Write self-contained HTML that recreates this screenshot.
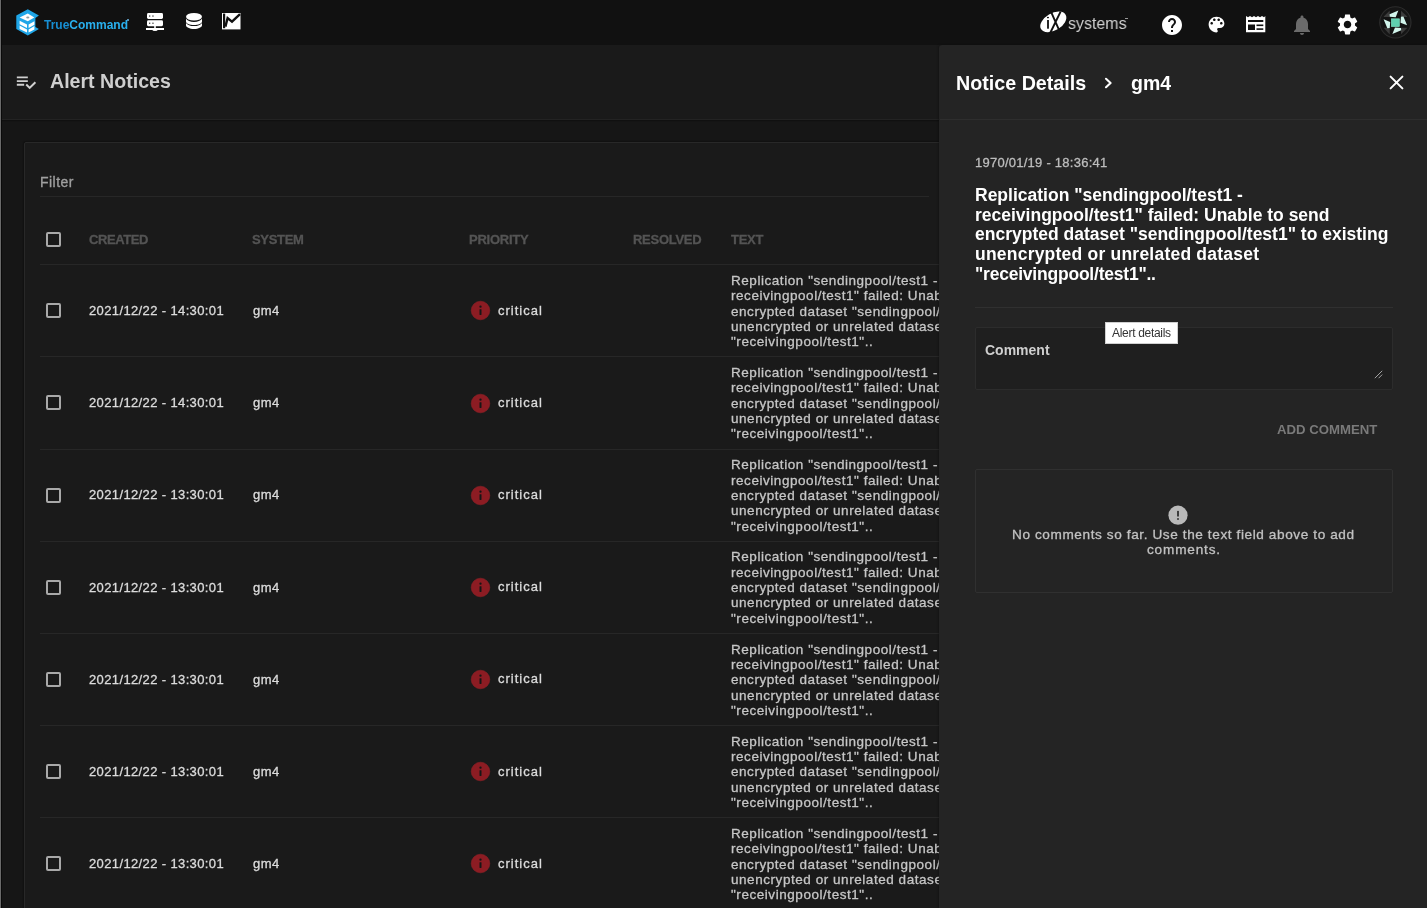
<!DOCTYPE html>
<html><head><meta charset="utf-8"><style>
*{box-sizing:border-box;margin:0;padding:0}
html,body{width:1427px;height:908px;overflow:hidden;background:#161616;font-family:"Liberation Sans",sans-serif;}
.abs{position:absolute}
.t{position:absolute;white-space:nowrap;line-height:1;will-change:transform}
.m{-webkit-text-stroke:0.3px currentColor}
svg{position:absolute;overflow:visible}
#top{left:0;top:0;width:1427px;height:45px;background:#111111}
#winl{left:0;top:0;width:1px;height:908px;background:#6a6a6a}
#winl2{left:1px;top:0;width:1px;height:908px;background:#0a0a0a}
#mainhdr{left:2px;top:45px;width:938px;height:75px;background:#1a1a1a;border-bottom:1px solid #232323;box-shadow:0 1px 1px #101010}
#card{left:24px;top:142px;width:930px;height:800px;background:#1a1a1a;border:1px solid #282828;border-radius:2px;box-shadow:0 0 1px 1px #111}
#panel{left:939px;top:45px;width:488px;height:863px;background:#242424;border-top-left-radius:3px;box-shadow:-1px 0 2px rgba(0,0,0,0.25)}
.cb{position:absolute;width:15px;height:15px;border:2px solid #a9a9a9;border-radius:2px}
.hl{position:absolute;height:1px;background:#272727}
</style></head><body>
<div class="abs" id="top"></div><div class="abs" id="mainhdr"></div><div class="abs" id="card"></div><svg style="left:15px;top:71.2px" width="22" height="22" viewBox="0 0 24 24"><path fill="#d0d0d0" d="M14 10H2v2h12v-2zm0-4H2v2h12V6zM2 16h8v-2H2v2zm19.5-4.5L23 13l-6.99 7-4.51-4.5L13 14l3.01 3 5.49-5.5z"/></svg><div class="t " style="left:50.0px;top:72.41px;font-size:19.6px;font-weight:700;color:#cfcfcf;letter-spacing:0px;">Alert Notices</div>
<div class="t m" style="left:40.0px;top:175.15px;font-size:14px;font-weight:400;color:#a0a0a0;letter-spacing:0.48px;">Filter</div>
<div class="hl" style="left:40px;top:196px;width:889px"></div><div class="cb" style="left:46px;top:232px"></div><div class="t m" style="left:89.4px;top:232.50px;font-size:13px;font-weight:700;color:#545454;letter-spacing:-0.4px;">CREATED</div>
<div class="t m" style="left:252.3px;top:232.50px;font-size:13px;font-weight:700;color:#545454;letter-spacing:-0.33px;">SYSTEM</div>
<div class="t m" style="left:469.3px;top:232.50px;font-size:13px;font-weight:700;color:#545454;letter-spacing:-0.24px;">PRIORITY</div>
<div class="t m" style="left:633.0px;top:232.50px;font-size:13px;font-weight:700;color:#545454;letter-spacing:-0.28px;">RESOLVED</div>
<div class="t m" style="left:731.4px;top:232.50px;font-size:13px;font-weight:700;color:#545454;letter-spacing:-0.3px;">TEXT</div>
<div class="hl" style="left:40px;top:264px;width:900px"></div><div class="cb" style="left:46px;top:303.2px"></div><div class="t m" style="left:89.2px;top:304.00px;font-size:13px;font-weight:400;color:#dcdcdc;letter-spacing:0.37px;">2021/12/22 - 14:30:01</div>
<div class="t m" style="left:252.5px;top:304.00px;font-size:13px;font-weight:400;color:#dcdcdc;letter-spacing:0.5px;">gm4</div>
<svg style="left:471px;top:301.4px" width="19" height="19" viewBox="0 0 19 19"><circle cx="9.5" cy="9.5" r="9.3" fill="#8c1c23" stroke="#9a2229" stroke-width="0.5"/><rect x="8.5" y="8.2" width="2" height="5.8" rx="0.4" fill="#161616"/><circle cx="9.5" cy="5.7" r="1.15" fill="#161616"/></svg><div class="t m" style="left:497.8px;top:303.80px;font-size:13px;font-weight:400;color:#dcdcdc;letter-spacing:1.0px;">critical</div>
<div class="t m" style="left:730.6px;top:273.97px;font-size:13.5px;font-weight:400;color:#c6c6c6;letter-spacing:0.55px;">Replication "sendingpool/test1 -</div>
<div class="t m" style="left:730.6px;top:289.27px;font-size:13.5px;font-weight:400;color:#c6c6c6;letter-spacing:0.55px;">receivingpool/test1" failed: Unable to send</div>
<div class="t m" style="left:730.6px;top:304.57px;font-size:13.5px;font-weight:400;color:#c6c6c6;letter-spacing:0.55px;">encrypted dataset "sendingpool/test1" to existing</div>
<div class="t m" style="left:730.6px;top:319.87px;font-size:13.5px;font-weight:400;color:#c6c6c6;letter-spacing:0.55px;">unencrypted or unrelated dataset</div>
<div class="t m" style="left:730.6px;top:335.17px;font-size:13.5px;font-weight:400;color:#c6c6c6;letter-spacing:0.55px;">"receivingpool/test1"..</div>
<div class="cb" style="left:46px;top:395.37px"></div><div class="t m" style="left:89.2px;top:396.17px;font-size:13px;font-weight:400;color:#dcdcdc;letter-spacing:0.37px;">2021/12/22 - 14:30:01</div>
<div class="t m" style="left:252.5px;top:396.17px;font-size:13px;font-weight:400;color:#dcdcdc;letter-spacing:0.5px;">gm4</div>
<svg style="left:471px;top:393.57px" width="19" height="19" viewBox="0 0 19 19"><circle cx="9.5" cy="9.5" r="9.3" fill="#8c1c23" stroke="#9a2229" stroke-width="0.5"/><rect x="8.5" y="8.2" width="2" height="5.8" rx="0.4" fill="#161616"/><circle cx="9.5" cy="5.7" r="1.15" fill="#161616"/></svg><div class="t m" style="left:497.8px;top:395.97px;font-size:13px;font-weight:400;color:#dcdcdc;letter-spacing:1.0px;">critical</div>
<div class="t m" style="left:730.6px;top:366.14px;font-size:13.5px;font-weight:400;color:#c6c6c6;letter-spacing:0.55px;">Replication "sendingpool/test1 -</div>
<div class="t m" style="left:730.6px;top:381.44px;font-size:13.5px;font-weight:400;color:#c6c6c6;letter-spacing:0.55px;">receivingpool/test1" failed: Unable to send</div>
<div class="t m" style="left:730.6px;top:396.74px;font-size:13.5px;font-weight:400;color:#c6c6c6;letter-spacing:0.55px;">encrypted dataset "sendingpool/test1" to existing</div>
<div class="t m" style="left:730.6px;top:412.04px;font-size:13.5px;font-weight:400;color:#c6c6c6;letter-spacing:0.55px;">unencrypted or unrelated dataset</div>
<div class="t m" style="left:730.6px;top:427.34px;font-size:13.5px;font-weight:400;color:#c6c6c6;letter-spacing:0.55px;">"receivingpool/test1"..</div>
<div class="hl" style="left:40px;top:356.37px;width:900px"></div><div class="cb" style="left:46px;top:487.53999999999996px"></div><div class="t m" style="left:89.2px;top:488.34px;font-size:13px;font-weight:400;color:#dcdcdc;letter-spacing:0.37px;">2021/12/22 - 13:30:01</div>
<div class="t m" style="left:252.5px;top:488.34px;font-size:13px;font-weight:400;color:#dcdcdc;letter-spacing:0.5px;">gm4</div>
<svg style="left:471px;top:485.73999999999995px" width="19" height="19" viewBox="0 0 19 19"><circle cx="9.5" cy="9.5" r="9.3" fill="#8c1c23" stroke="#9a2229" stroke-width="0.5"/><rect x="8.5" y="8.2" width="2" height="5.8" rx="0.4" fill="#161616"/><circle cx="9.5" cy="5.7" r="1.15" fill="#161616"/></svg><div class="t m" style="left:497.8px;top:488.14px;font-size:13px;font-weight:400;color:#dcdcdc;letter-spacing:1.0px;">critical</div>
<div class="t m" style="left:730.6px;top:458.31px;font-size:13.5px;font-weight:400;color:#c6c6c6;letter-spacing:0.55px;">Replication "sendingpool/test1 -</div>
<div class="t m" style="left:730.6px;top:473.61px;font-size:13.5px;font-weight:400;color:#c6c6c6;letter-spacing:0.55px;">receivingpool/test1" failed: Unable to send</div>
<div class="t m" style="left:730.6px;top:488.91px;font-size:13.5px;font-weight:400;color:#c6c6c6;letter-spacing:0.55px;">encrypted dataset "sendingpool/test1" to existing</div>
<div class="t m" style="left:730.6px;top:504.21px;font-size:13.5px;font-weight:400;color:#c6c6c6;letter-spacing:0.55px;">unencrypted or unrelated dataset</div>
<div class="t m" style="left:730.6px;top:519.51px;font-size:13.5px;font-weight:400;color:#c6c6c6;letter-spacing:0.55px;">"receivingpool/test1"..</div>
<div class="hl" style="left:40px;top:448.53999999999996px;width:900px"></div><div class="cb" style="left:46px;top:579.71px"></div><div class="t m" style="left:89.2px;top:580.51px;font-size:13px;font-weight:400;color:#dcdcdc;letter-spacing:0.37px;">2021/12/22 - 13:30:01</div>
<div class="t m" style="left:252.5px;top:580.51px;font-size:13px;font-weight:400;color:#dcdcdc;letter-spacing:0.5px;">gm4</div>
<svg style="left:471px;top:577.9100000000001px" width="19" height="19" viewBox="0 0 19 19"><circle cx="9.5" cy="9.5" r="9.3" fill="#8c1c23" stroke="#9a2229" stroke-width="0.5"/><rect x="8.5" y="8.2" width="2" height="5.8" rx="0.4" fill="#161616"/><circle cx="9.5" cy="5.7" r="1.15" fill="#161616"/></svg><div class="t m" style="left:497.8px;top:580.31px;font-size:13px;font-weight:400;color:#dcdcdc;letter-spacing:1.0px;">critical</div>
<div class="t m" style="left:730.6px;top:550.48px;font-size:13.5px;font-weight:400;color:#c6c6c6;letter-spacing:0.55px;">Replication "sendingpool/test1 -</div>
<div class="t m" style="left:730.6px;top:565.78px;font-size:13.5px;font-weight:400;color:#c6c6c6;letter-spacing:0.55px;">receivingpool/test1" failed: Unable to send</div>
<div class="t m" style="left:730.6px;top:581.08px;font-size:13.5px;font-weight:400;color:#c6c6c6;letter-spacing:0.55px;">encrypted dataset "sendingpool/test1" to existing</div>
<div class="t m" style="left:730.6px;top:596.38px;font-size:13.5px;font-weight:400;color:#c6c6c6;letter-spacing:0.55px;">unencrypted or unrelated dataset</div>
<div class="t m" style="left:730.6px;top:611.68px;font-size:13.5px;font-weight:400;color:#c6c6c6;letter-spacing:0.55px;">"receivingpool/test1"..</div>
<div class="hl" style="left:40px;top:540.71px;width:900px"></div><div class="cb" style="left:46px;top:671.88px"></div><div class="t m" style="left:89.2px;top:672.68px;font-size:13px;font-weight:400;color:#dcdcdc;letter-spacing:0.37px;">2021/12/22 - 13:30:01</div>
<div class="t m" style="left:252.5px;top:672.68px;font-size:13px;font-weight:400;color:#dcdcdc;letter-spacing:0.5px;">gm4</div>
<svg style="left:471px;top:670.08px" width="19" height="19" viewBox="0 0 19 19"><circle cx="9.5" cy="9.5" r="9.3" fill="#8c1c23" stroke="#9a2229" stroke-width="0.5"/><rect x="8.5" y="8.2" width="2" height="5.8" rx="0.4" fill="#161616"/><circle cx="9.5" cy="5.7" r="1.15" fill="#161616"/></svg><div class="t m" style="left:497.8px;top:672.48px;font-size:13px;font-weight:400;color:#dcdcdc;letter-spacing:1.0px;">critical</div>
<div class="t m" style="left:730.6px;top:642.65px;font-size:13.5px;font-weight:400;color:#c6c6c6;letter-spacing:0.55px;">Replication "sendingpool/test1 -</div>
<div class="t m" style="left:730.6px;top:657.95px;font-size:13.5px;font-weight:400;color:#c6c6c6;letter-spacing:0.55px;">receivingpool/test1" failed: Unable to send</div>
<div class="t m" style="left:730.6px;top:673.25px;font-size:13.5px;font-weight:400;color:#c6c6c6;letter-spacing:0.55px;">encrypted dataset "sendingpool/test1" to existing</div>
<div class="t m" style="left:730.6px;top:688.55px;font-size:13.5px;font-weight:400;color:#c6c6c6;letter-spacing:0.55px;">unencrypted or unrelated dataset</div>
<div class="t m" style="left:730.6px;top:703.85px;font-size:13.5px;font-weight:400;color:#c6c6c6;letter-spacing:0.55px;">"receivingpool/test1"..</div>
<div class="hl" style="left:40px;top:632.88px;width:900px"></div><div class="cb" style="left:46px;top:764.05px"></div><div class="t m" style="left:89.2px;top:764.85px;font-size:13px;font-weight:400;color:#dcdcdc;letter-spacing:0.37px;">2021/12/22 - 13:30:01</div>
<div class="t m" style="left:252.5px;top:764.85px;font-size:13px;font-weight:400;color:#dcdcdc;letter-spacing:0.5px;">gm4</div>
<svg style="left:471px;top:762.25px" width="19" height="19" viewBox="0 0 19 19"><circle cx="9.5" cy="9.5" r="9.3" fill="#8c1c23" stroke="#9a2229" stroke-width="0.5"/><rect x="8.5" y="8.2" width="2" height="5.8" rx="0.4" fill="#161616"/><circle cx="9.5" cy="5.7" r="1.15" fill="#161616"/></svg><div class="t m" style="left:497.8px;top:764.65px;font-size:13px;font-weight:400;color:#dcdcdc;letter-spacing:1.0px;">critical</div>
<div class="t m" style="left:730.6px;top:734.82px;font-size:13.5px;font-weight:400;color:#c6c6c6;letter-spacing:0.55px;">Replication "sendingpool/test1 -</div>
<div class="t m" style="left:730.6px;top:750.12px;font-size:13.5px;font-weight:400;color:#c6c6c6;letter-spacing:0.55px;">receivingpool/test1" failed: Unable to send</div>
<div class="t m" style="left:730.6px;top:765.42px;font-size:13.5px;font-weight:400;color:#c6c6c6;letter-spacing:0.55px;">encrypted dataset "sendingpool/test1" to existing</div>
<div class="t m" style="left:730.6px;top:780.72px;font-size:13.5px;font-weight:400;color:#c6c6c6;letter-spacing:0.55px;">unencrypted or unrelated dataset</div>
<div class="t m" style="left:730.6px;top:796.02px;font-size:13.5px;font-weight:400;color:#c6c6c6;letter-spacing:0.55px;">"receivingpool/test1"..</div>
<div class="hl" style="left:40px;top:725.05px;width:900px"></div><div class="cb" style="left:46px;top:856.22px"></div><div class="t m" style="left:89.2px;top:857.02px;font-size:13px;font-weight:400;color:#dcdcdc;letter-spacing:0.37px;">2021/12/22 - 13:30:01</div>
<div class="t m" style="left:252.5px;top:857.02px;font-size:13px;font-weight:400;color:#dcdcdc;letter-spacing:0.5px;">gm4</div>
<svg style="left:471px;top:854.4200000000001px" width="19" height="19" viewBox="0 0 19 19"><circle cx="9.5" cy="9.5" r="9.3" fill="#8c1c23" stroke="#9a2229" stroke-width="0.5"/><rect x="8.5" y="8.2" width="2" height="5.8" rx="0.4" fill="#161616"/><circle cx="9.5" cy="5.7" r="1.15" fill="#161616"/></svg><div class="t m" style="left:497.8px;top:856.82px;font-size:13px;font-weight:400;color:#dcdcdc;letter-spacing:1.0px;">critical</div>
<div class="t m" style="left:730.6px;top:826.99px;font-size:13.5px;font-weight:400;color:#c6c6c6;letter-spacing:0.55px;">Replication "sendingpool/test1 -</div>
<div class="t m" style="left:730.6px;top:842.29px;font-size:13.5px;font-weight:400;color:#c6c6c6;letter-spacing:0.55px;">receivingpool/test1" failed: Unable to send</div>
<div class="t m" style="left:730.6px;top:857.59px;font-size:13.5px;font-weight:400;color:#c6c6c6;letter-spacing:0.55px;">encrypted dataset "sendingpool/test1" to existing</div>
<div class="t m" style="left:730.6px;top:872.89px;font-size:13.5px;font-weight:400;color:#c6c6c6;letter-spacing:0.55px;">unencrypted or unrelated dataset</div>
<div class="t m" style="left:730.6px;top:888.19px;font-size:13.5px;font-weight:400;color:#c6c6c6;letter-spacing:0.55px;">"receivingpool/test1"..</div>
<div class="hl" style="left:40px;top:817.22px;width:900px"></div><div class="abs" id="panel"></div><div class="t " style="left:956.0px;top:73.52px;font-size:19.7px;font-weight:700;color:#ffffff;letter-spacing:0px;">Notice Details</div>
<svg style="left:1104px;top:77px" width="10" height="12" viewBox="0 0 10 12"><path d="M2 1.8L6.6 6L2 10.2" stroke="#fff" stroke-width="2.1" fill="none" stroke-linecap="round" stroke-linejoin="round"/></svg><div class="t " style="left:1131.0px;top:73.69px;font-size:19.5px;font-weight:700;color:#ffffff;letter-spacing:0px;">gm4</div>
<svg style="left:1389px;top:75px" width="16" height="16" viewBox="0 0 16 16"><path d="M1.6 1.6L13.4 13.4M13.4 1.6L1.6 13.4" stroke="#fff" stroke-width="2" stroke-linecap="round"/></svg><div class="hl" style="left:940px;top:119px;width:487px;background:#2e2e2e"></div><div class="t m" style="left:974.6px;top:155.60px;font-size:13px;font-weight:400;color:#bdbdbd;letter-spacing:0.25px;">1970/01/19 - 18:36:41</div>
<div class="t " style="left:975.0px;top:187.29px;font-size:17.5px;font-weight:700;color:#ffffff;letter-spacing:0px;">Replication "sendingpool/test1 -</div>
<div class="t " style="left:975.0px;top:206.89px;font-size:17.5px;font-weight:700;color:#ffffff;letter-spacing:0px;">receivingpool/test1" failed: Unable to send</div>
<div class="t " style="left:975.0px;top:226.49px;font-size:17.5px;font-weight:700;color:#ffffff;letter-spacing:0px;">encrypted dataset "sendingpool/test1" to existing</div>
<div class="t " style="left:975.0px;top:246.09px;font-size:17.5px;font-weight:700;color:#ffffff;letter-spacing:0.22px;">unencrypted or unrelated dataset</div>
<div class="t " style="left:975.0px;top:265.69px;font-size:17.5px;font-weight:700;color:#ffffff;letter-spacing:-0.22px;">"receivingpool/test1"..</div>
<div class="hl" style="left:975px;top:307px;width:418px;background:#303030"></div><div class="abs" style="left:975px;top:327px;width:418px;height:63px;background:#1f1f1f;border:1px solid #2c2c2c;border-radius:2px"></div><div class="t " style="left:985.0px;top:343.35px;font-size:14px;font-weight:700;color:#cfcfcf;letter-spacing:0px;">Comment</div>
<svg style="left:1373px;top:369px" width="10" height="10" viewBox="0 0 10 10"><path d="M1.8 9.2L9.2 1.8M5.6 9.2L9.2 5.6" stroke="#a5a5a5" stroke-width="1"/></svg><div class="abs" style="left:1105px;top:322px;width:73px;height:22px;background:#fff;border:1px solid #d0d0d0"></div><div class="t " style="left:1111.6px;top:326.84px;font-size:12px;font-weight:400;color:#333;letter-spacing:-0.3px;">Alert details</div>
<div class="t " style="left:1277.0px;top:423.43px;font-size:13.2px;font-weight:700;color:#7a7a7a;letter-spacing:0px;">ADD COMMENT</div>
<div class="abs" style="left:975px;top:469px;width:418px;height:124px;border:1px solid #303030;border-radius:2px"></div><svg style="left:1168px;top:505px" width="20" height="20" viewBox="0 0 20 20"><circle cx="10" cy="10.2" r="9.6" fill="#b9b9b9"/><rect x="9.15" y="5.9" width="1.7" height="5.6" fill="#2a2a2a"/><rect x="9.15" y="13.2" width="1.7" height="1.6" fill="#2a2a2a"/></svg><div class="t m" style="left:1012.0px;top:528.49px;font-size:13.6px;font-weight:400;color:#c2c2c2;letter-spacing:0.6px;">No comments so far. Use the text field above to add</div>
<div class="t m" style="left:1147.0px;top:542.99px;font-size:13.6px;font-weight:400;color:#c2c2c2;letter-spacing:0.82px;">comments.</div>
<svg style="left:16px;top:9px" width="24" height="27" viewBox="0 0 24 27">
<path d="M11.8 0.2L22.9 6.6L19.4 9.1L19.4 18L22.9 20L11.8 26.4L0.3 20L0.3 6.6Z" fill="#1fa6e8"/>
<path d="M3.6 8.6L11.8 4.6L18.4 8.6L11.8 12.2Z" fill="#fff"/>
<path d="M3.6 11.8L11 15.6L11 19L3.6 15.2Z M12.6 15.6L18.4 12.3L18.4 15.8L12.6 19Z" fill="#fff"/>
<path d="M3.6 16.6L11 20.4L11 23.6L3.6 20Z M12.6 20.4L18.4 17.1L18.4 20.4L12.6 23.6Z" fill="#fff"/>
<ellipse cx="11.8" cy="8.5" rx="1.6" ry="0.9" fill="#8fa0a8"/>
</svg><div class="abs" style="left:127px;top:19px;width:2px;height:2px;background:#5a8fb0"></div><div class="t " style="left:44.0px;top:18.64px;font-size:12px;font-weight:700;color:#29b0ee;letter-spacing:0px;"><span style="color:#178ed3">True</span><span style="color:#29b0ee">Command</span></div>
<svg style="left:146px;top:13px" width="18" height="18" viewBox="0 0 18 18">
<rect x="1" y="0" width="16" height="6" rx="1.4" fill="#fff"/>
<rect x="1" y="7.2" width="16" height="6" rx="1.4" fill="#fff"/>
<rect x="3" y="2.4" width="1.3" height="1.3" fill="#444"/><rect x="6.3" y="2.4" width="1.3" height="1.3" fill="#444"/>
<rect x="3" y="9.6" width="1.3" height="1.3" fill="#444"/><rect x="6.3" y="9.6" width="1.3" height="1.3" fill="#444"/>
<rect x="8.2" y="13" width="1.6" height="2.5" fill="#fff"/>
<rect x="0" y="15" width="18" height="2" fill="#fff"/>
<ellipse cx="9" cy="16.5" rx="2.8" ry="1.5" fill="#fff"/>
</svg><svg style="left:185.5px;top:13px" width="16" height="16" viewBox="0 0 16 16">
<ellipse cx="8" cy="3.8" rx="8" ry="3.8" fill="#fff"/>
<path d="M0 5.8C1.2 7.8 4.2 8.9 8 8.9S14.8 7.8 16 5.8V8.4C16 10.4 12.4 12 8 12S0 10.4 0 8.4Z" fill="#fff"/>
<path d="M0 10C1.2 12 4.2 13.1 8 13.1S14.8 12 16 10V12.3C16 14.3 12.4 16 8 16S0 14.3 0 12.3Z" fill="#fff"/>
</svg><svg style="left:222px;top:13px" width="19" height="17" viewBox="0 0 19 17">
<rect x="0" y="0" width="18.5" height="16.4" fill="#fff"/>
<path d="M2.1 0.6V15.2" stroke="#111" stroke-width="2.2" fill="none"/>
<path d="M3.4 13.6L5.6 5L10 8.6L18 1.2" stroke="#111" stroke-width="2.4" fill="none" stroke-linejoin="miter"/>
</svg><svg style="left:1039px;top:11px" width="30" height="22" viewBox="0 0 30 22">
<ellipse cx="14.3" cy="10.9" rx="14.2" ry="8.6" transform="rotate(-30 14.3 10.9)" fill="#fff"/>
<path d="M12.4 1.6L19.9 18.6M21.6 0.6L11.2 22" stroke="#111" stroke-width="1.9" fill="none"/>
<rect x="8.1" y="9" width="1.8" height="8.7" fill="#111"/>
<rect x="8" y="5.9" width="1.9" height="1.3" fill="#111"/>
</svg><div class="t " style="left:1068.0px;top:15.44px;font-size:17.2px;font-weight:400;color:#cfcfcf;letter-spacing:0px;transform:scaleX(0.93);transform-origin:0 0;">systems</div>
<div class="abs" style="left:1125px;top:18px;width:3px;height:1px;background:#999"></div><svg style="left:1160px;top:12.5px" width="24" height="24" viewBox="0 0 24 24"><path fill="#fff" d="M12 2C6.48 2 2 6.48 2 12s4.48 10 10 10 10-4.48 10-10S17.52 2 12 2zm1 17h-2v-2h2v2zm2.07-7.75l-.9.92C13.45 12.9 13 13.5 13 15h-2v-.5c0-1.1.45-2.1 1.17-2.83l1.24-1.26c.37-.36.59-.86.59-1.41 0-1.1-.9-2-2-2s-2 .9-2 2H8c0-2.21 1.79-4 4-4s4 1.79 4 4c0 .88-.36 1.68-.93 2.25z"/></svg><svg style="left:1206px;top:13.5px" width="21" height="21" viewBox="0 0 24 24"><path fill="#fff" d="M12 3c-4.97 0-9 4.03-9 9s4.03 9 9 9c.83 0 1.5-.67 1.5-1.5 0-.39-.15-.74-.39-1.01-.23-.26-.38-.61-.38-.99 0-.83.67-1.5 1.5-1.5H16c2.76 0 5-2.24 5-5 0-4.42-4.030-8-9-8zm-5.5 9c-.83 0-1.5-.67-1.5-1.5S5.67 9 6.5 9 8 9.67 8 10.5 7.33 12 6.5 12zm3-4C8.67 8 8 7.33 8 6.5S8.67 5 9.5 5s1.5.67 1.5 1.5S10.33 8 9.5 8zm5 0c-.83 0-1.5-.67-1.5-1.5S13.67 5 14.5 5s1.5.67 1.5 1.5S15.33 8 14.5 8zm3 4c-.83 0-1.5-.67-1.5-1.5S16.67 9 17.5 9s1.5.67 1.5 1.5-.67 1.5-1.5 1.5z"/></svg><svg style="left:1246px;top:16px" width="20" height="17" viewBox="0 0 20 17">
<path d="M0 0L2 1.2L4 0L6 1.2L8 0L10 1.2L12 0L14 1.2L16 0L18 1.2L19.3 0V16.2H0Z" fill="#fff"/>
<rect x="2" y="4" width="15.3" height="2" fill="#111"/>
<rect x="2" y="8.5" width="7" height="5.5" fill="#111"/>

<rect x="10.5" y="8.5" width="6.8" height="1.6" fill="#111"/>
<rect x="10.5" y="12.3" width="6.8" height="1.6" fill="#111"/>
</svg><svg style="left:1289.5px;top:12.5px" width="24" height="24" viewBox="0 0 24 24"><path fill="#6b6b6b" d="M12 22c1.1 0 2-.9 2-2h-4c0 1.1.89 2 2 2zm6-6v-5c0-3.07-1.64-5.64-4.5-6.32V4c0-.83-.67-1.5-1.5-1.5s-1.5.67-1.5 1.5v.68C7.630 5.36 6 7.92 6 11v5l-2 2v1h16v-1l-2-2z"/></svg><svg style="left:1334.5px;top:12px" width="25" height="25" viewBox="0 0 24 24"><path fill="#fff" d="M19.14 12.94c.04-.3.06-.61.06-.94 0-.32-.02-.64-.07-.94l2.030-1.58c.18-.14.23-.41.12-.61l-1.92-3.32c-.12-.22-.37-.29-.59-.22l-2.39.96c-.5-.38-1.03-.7-1.62-.94l-.36-2.54c-.04-.24-.24-.41-.48-.41h-3.84c-.24 0-.43.17-.47.41l-.36 2.54c-.59.24-1.13.57-1.62.94l-2.39-.96c-.22-.08-.47 0-.59.22L2.74 8.87c-.12.21-.08.47.12.61l2.03 1.58c-.05.3-.09.63-.09.94s.02.64.07.94l-2.03 1.58c-.18.14-.23.41-.12.61l1.92 3.32c.12.22.37.29.59.22l2.39-.96c.5.38 1.03.7 1.62.94l.36 2.54c.05.24.24.41.48.41h3.84c.24 0 .44-.17.47-.41l.36-2.54c.59-.24 1.13-.56 1.62-.94l2.39.96c.22.08.47 0 .59-.22l1.92-3.32c.12-.22.07-.47-.12-.61l-2.01-1.58zM12 15.6c-1.98 0-3.6-1.62-3.6-3.6s1.62-3.6 3.6-3.6 3.6 1.62 3.6 3.6-1.62 3.6-3.6 3.6z"/></svg><svg style="left:1375px;top:2px" width="40" height="40" viewBox="0 0 908 908">
<circle cx="462" cy="462" r="355" fill="#161616" stroke="#2d2d2d" stroke-width="26"/>
<path d="M330 200L590 200L730 330L730 590L590 730L330 730L200 590L200 330Z" fill="#3b3b3b"/>
<path d="M335 185H590V340H740V585H590V740H335V585H185V340H335Z" fill="#121212"/>
<path d="M330 280L530 195L470 345L335 335Z M644 330L729 530L579 470L589 335Z M594 644L394 729L454 579L589 589Z M280 594L195 394L345 454L335 589Z" fill="#d2f5ec"/>
<rect x="372" y="382" width="180" height="175" fill="#5fd0b0" stroke="#7ee8c8" stroke-width="14"/>
</svg><div class="abs" id="winl"></div><div class="abs" id="winl2"></div>
</body></html>
